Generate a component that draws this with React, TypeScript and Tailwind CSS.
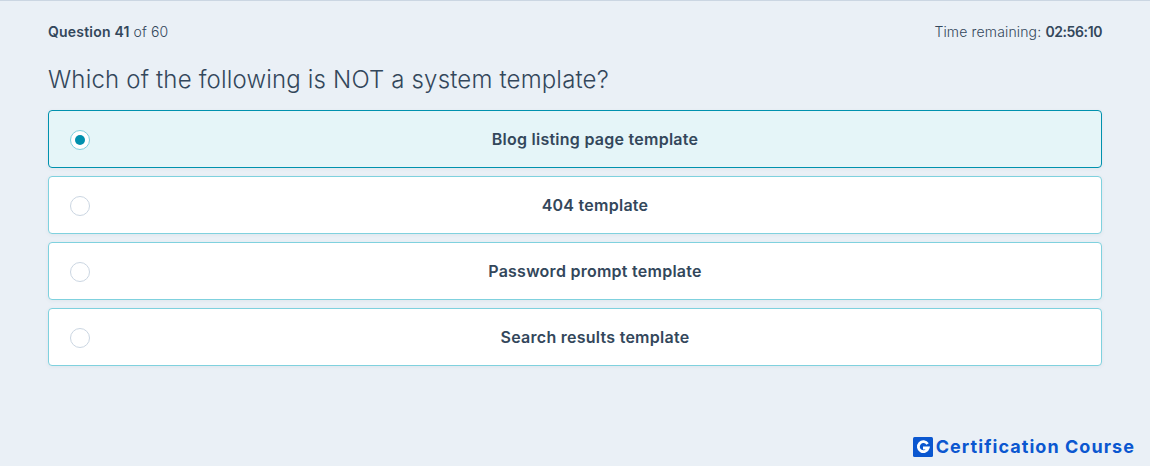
import { useState } from 'react';

const options = ['Blog listing page template', '404 template', 'Password prompt template', 'Search results template'];

export default function App() {
  const [selected, setSelected] = useState(0);

  return (
    <div className="relative h-[466px] w-[1150px] overflow-hidden border-t border-[#cbd6e2] bg-[#eaf0f6] font-['Inter',sans-serif] text-[#33475b]">
      <div className="px-12 pt-[21px]">
        <div className="flex items-center justify-between text-sm leading-5">
          <p>
            <span className="font-semibold tracking-[0.2px]">Question 41</span>{' '}
            <span className="font-light tracking-[0.1px]">of 60</span>
          </p>
          <p className="font-light tracking-[0.15px]">
            Time remaining: <span className="font-semibold tracking-[-0.4px]">02:56:10</span>
          </p>
        </div>
        <h1 className="mt-5 text-2xl font-light leading-9 tracking-[0.17px]">Which of the following is NOT a system template?</h1>
        <div className="mt-3 flex flex-col gap-2">
          {options.map((o, i) => (
            <div
              key={o}
              onClick={() => setSelected(i)}
              className={`flex h-[58px] items-center rounded border pl-[21px] pr-px shadow-[0_1px_4px_rgba(45,62,80,0.06)] ${
                selected === i ? 'border-[#0091ae] bg-[#e5f5f8]' : 'border-[#7fd1de] bg-white'
              }`}
            >
              <span
                className={`mt-px flex h-5 w-5 items-center justify-center rounded-full border ${
                  selected === i ? 'border-[#7fd1de] bg-white' : 'border-[#cbd6e2] bg-white'
                }`}
              >
                {selected === i && <span className="h-2.5 w-2.5 rounded-full bg-[#0091ae]" />}
              </span>
              <span className="flex-1 text-center text-base font-semibold tracking-[0.26px]">{o}</span>
            </div>
          ))}
        </div>
      </div>
      <div className="absolute bottom-[9px] right-[15px] flex items-center gap-[3px]">
        <svg width="20" height="20" viewBox="0 0 20 20">
          <rect width="20" height="20" rx="1.5" fill="#0b57d0" />
          <path d="M14.6 7A5 5 0 1 0 15.2 11H10" fill="none" stroke="#fff" strokeWidth="2.8" />
        </svg>
        <span className="text-lg font-bold leading-5 tracking-[1.05px] text-[#0b57d0]">Certification Course</span>
      </div>
    </div>
  );
}
